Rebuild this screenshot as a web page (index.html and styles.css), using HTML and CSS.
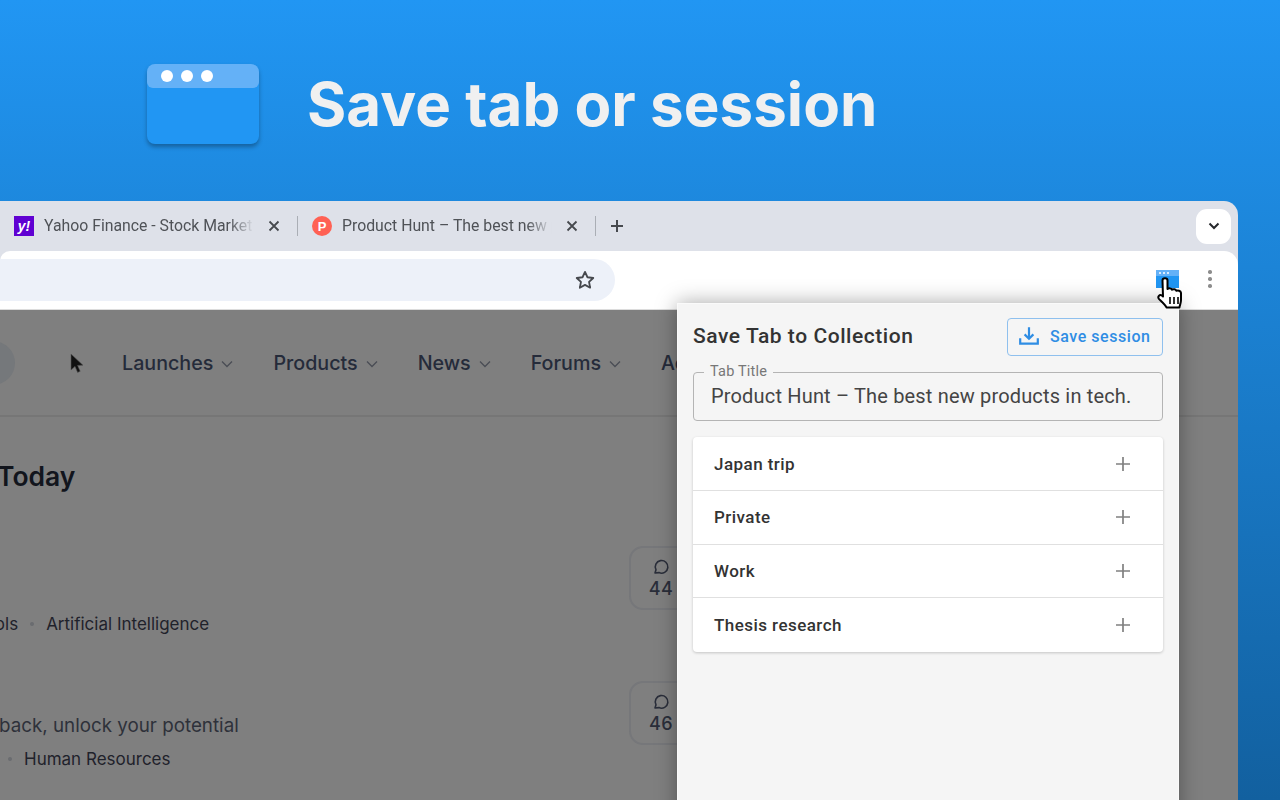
FILE: index.html
```html
<!DOCTYPE html>
<html lang="en">
<head>
  <meta charset="UTF-8" />
  <meta name="viewport" content="width=device-width, initial-scale=1" />
  <title>Save tab or session</title>
  <link rel="stylesheet" href="styles.css">
</head>
<body>

  <header class="hero">
    <div class="app-icon">
      <div class="app-icon-bar"><span></span><span></span><span></span></div>
    </div>
    <h1>Save tab or session</h1>
  </header>

  <div class="browser">

    <!-- Tab strip -->
    <div class="tabstrip">
      <div class="tab">
        <span class="favicon favicon-yahoo">y!</span>
        <span class="tab-title">Yahoo Finance - Stock Market Live</span>
        <svg class="tab-close" viewBox="0 0 12 12"><path d="M1.5 1.5l9 9M10.5 1.5l-9 9"/></svg>
      </div>
      <span class="tab-sep"></span>
      <div class="tab">
        <span class="favicon favicon-ph">P</span>
        <span class="tab-title">Product Hunt – The best new products</span>
        <svg class="tab-close" viewBox="0 0 12 12"><path d="M1.5 1.5l9 9M10.5 1.5l-9 9"/></svg>
      </div>
      <span class="tab-sep"></span>
      <svg class="tab-new" viewBox="0 0 14 14"><path d="M7 1v12M1 7h12"/></svg>
      <div class="tab-search">
        <svg viewBox="0 0 12 8"><path d="M1.5 1.5L6 6l4.5-4.5"/></svg>
      </div>
    </div>

    <!-- Toolbar -->
    <div class="toolbar">
      <div class="omnibox">
        <svg class="star" viewBox="0 0 24 24"><path d="M12 3.2l2.7 5.8 6.3.8-4.6 4.3 1.2 6.3-5.6-3.1-5.6 3.1 1.2-6.3L3 9.8l6.3-.8z"/></svg>
      </div>
      <div class="ext-icon"><div class="ext-icon-bar"><span></span><span></span><span></span></div></div>
      <div class="kebab"><span></span><span></span><span></span></div>
    </div>

    <!-- Dimmed page -->
    <div class="page">
      <nav class="page-nav">
        <span class="search-blob"></span>
        <a>Launches <svg viewBox="0 0 12 8"><path d="M1 1.5l5 5 5-5"/></svg></a>
        <a>Products <svg viewBox="0 0 12 8"><path d="M1 1.5l5 5 5-5"/></svg></a>
        <a>News <svg viewBox="0 0 12 8"><path d="M1 1.5l5 5 5-5"/></svg></a>
        <a>Forums <svg viewBox="0 0 12 8"><path d="M1 1.5l5 5 5-5"/></svg></a>
        <a>Advertise</a>
      </nav>

      <h2 class="page-heading">Today</h2>

      <div class="post">
        <div class="post-info">
          <div class="post-tags post-tags-first">
            <span>Tools</span><i></i><span>Artificial Intelligence</span>
          </div>
        </div>
        <div class="post-comments">
          <svg viewBox="0 0 18 18"><path d="M3 15l1-3.2A6.3 6.3 0 1 1 7 14.6z"/></svg>
          <b>44</b>
        </div>
      </div>

      <div class="post">
        <div class="post-info">
          <p class="post-tagline">back, unlock your potential</p>
          <div class="post-tags post-tags-second">
            <i></i><span>Human Resources</span>
          </div>
        </div>
        <div class="post-comments">
          <svg viewBox="0 0 18 18"><path d="M3 15l1-3.2A6.3 6.3 0 1 1 7 14.6z"/></svg>
          <b>46</b>
        </div>
      </div>
    </div>

    <!-- Extension popup -->
    <div class="popup">
      <div class="popup-head">
        <h3>Save Tab to Collection</h3>
        <button class="save-btn">
          <svg viewBox="0 0 20 20"><path d="M10 2v10M6 8.5l4 4 4-4M2 12v5h16v-5"/></svg>
          Save session
        </button>
      </div>

      <fieldset class="title-field">
        <legend>Tab Title</legend>
        <div class="title-value">Product Hunt – The best new products in tech.</div>
      </fieldset>

      <ul class="collections">
        <li>Japan trip <svg viewBox="0 0 16 16"><path d="M8 1v14M1 8h14"/></svg></li>
        <li>Private <svg viewBox="0 0 16 16"><path d="M8 1v14M1 8h14"/></svg></li>
        <li>Work <svg viewBox="0 0 16 16"><path d="M8 1v14M1 8h14"/></svg></li>
        <li>Thesis research <svg viewBox="0 0 16 16"><path d="M8 1v14M1 8h14"/></svg></li>
      </ul>
    </div>

    <!-- Cursors -->
    <svg class="cursor-arrow" viewBox="0 0 14 22"><path d="M1 1v16l4-3.6 2.6 6 2.6-1.1-2.6-5.9 5.4-.2z"/></svg>
    <svg class="cursor-hand" viewBox="0 0 28 32">
      <path class="hand-fill" d="M5.5 3.5c0-3 5-3 5 0V12c1.3-1 3.8-.9 4.4.7 1.3-.9 4-.7 4.4 1.1 1.4-.7 4.4-.2 4.7 2V23c0 3-1 4.5-1.6 7.5H9.5c-1-2.6-3.4-4.6-7.6-8.6-1.6-2 .6-5 3-3.4l1.1 1z"/>
      <path class="hand-lines" d="M13 20v7M17 20v7M21 20v7"/>
    </svg>
  </div>

</body>
</html>
```

FILE: styles.css
```css
* {
  margin: 0;
  padding: 0;
  box-sizing: border-box;
}

body {
  width: 1280px;
  height: 800px;
  overflow: hidden;
  font-family: 'Inter', sans-serif;
  background: linear-gradient(to bottom, #2196f3, #12609f);
}

/* Hero */
.hero {
  display: flex;
  align-items: center;
  gap: 48px;
  height: 201px;
  padding: 7px 0 0 147px;
}

.hero h1 {
  font-size: 60px;
  font-weight: 700;
  letter-spacing: 0.05px;
  color: #f0f0f0;
}

.app-icon {
  width: 112px;
  height: 80px;
  background: #2196f3;
  border-radius: 8px;
  box-shadow: 0 3px 4px rgba(0, 0, 0, 0.3);
}

.app-icon-bar {
  display: flex;
  align-items: center;
  gap: 8px;
  height: 24px;
  padding-left: 14px;
  background: #64b1f7;
  border-radius: 8px 8px 6px 6px;
}

.app-icon-bar span {
  width: 12px;
  height: 12px;
  border-radius: 50%;
  background: #fff;
}

/* Browser window */
.browser {
  position: relative;
  width: 1238px;
  height: 599px;
  background: #dee1e9;
  border-radius: 0 14px 0 0;
  overflow: hidden;
}

.tabstrip {
  display: flex;
  align-items: center;
  height: 50px;
}

.tab {
  display: flex;
  align-items: center;
  width: 297px;
  padding-left: 14px;
}

.tab-sep {
  width: 1px;
  height: 20px;
  background: #aaaeb5;
}

.favicon {
  display: flex;
  align-items: center;
  justify-content: center;
  width: 20px;
  height: 20px;
  margin-right: 10px;
  color: #fff;
  font-family: 'Liberation Sans', sans-serif;
  font-weight: 700;
}

.favicon-yahoo {
  background: #6001d2;
  font-size: 14px;
  font-style: italic;
}

.favicon-ph {
  background: #ff6154;
  border-radius: 50%;
  font-size: 13px;
}

.tab-title {
  width: 210px;
  padding-bottom: 2px;
  overflow: hidden;
  white-space: nowrap;
  font-family: 'Roboto', sans-serif;
  font-size: 15.8px;
  color: #4f5257;
  -webkit-mask-image: linear-gradient(to right, #000 88%, transparent);
  mask-image: linear-gradient(to right, #000 88%, transparent);
}

.tab-close {
  width: 12px;
  height: 12px;
  margin-left: 14px;
  fill: none;
  stroke: #46494e;
  stroke-width: 1.8;
}

.tab-new {
  width: 14px;
  height: 14px;
  margin-left: 14px;
  fill: none;
  stroke: #46494e;
  stroke-width: 2;
}

.tab-search {
  display: flex;
  align-items: center;
  justify-content: center;
  width: 35px;
  height: 35px;
  margin: 0 7px 0 auto;
  background: #fff;
  border-radius: 11px;
}

.tab-search svg {
  width: 12px;
  height: 8px;
  fill: none;
  stroke: #26282c;
  stroke-width: 2;
}

.toolbar {
  display: flex;
  align-items: center;
  height: 59px;
  background: #fff;
  border-bottom: 1px solid #dcdcdc;
  border-radius: 10px 14px 0 0;
}

.omnibox {
  display: flex;
  align-items: center;
  justify-content: flex-end;
  width: 615px;
  height: 42px;
  margin-top: -1px;
  padding-right: 19px;
  background: #edf1f9;
  border-radius: 0 21px 21px 0;
}

.star {
  width: 22px;
  height: 22px;
  fill: none;
  stroke: #46494e;
  stroke-width: 2;
  stroke-linejoin: round;
}

.ext-icon {
  width: 23px;
  height: 18px;
  margin: -2px 0 0 541px;
  background: #2196f3;
}

.ext-icon-bar {
  display: flex;
  align-items: center;
  gap: 2px;
  height: 6px;
  padding-left: 3px;
  background: #64b1f7;
}

.ext-icon-bar span {
  width: 2px;
  height: 2px;
  border-radius: 50%;
  background: #fff;
}

.kebab {
  display: flex;
  flex-direction: column;
  gap: 3.5px;
  margin: -2px 0 0 29px;
}

.kebab span {
  width: 3.5px;
  height: 3.5px;
  border-radius: 50%;
  background: #8d8d8d;
}

/* Dimmed page behind the popup */
.page {
  height: 490px;
  background: #7f7f7f;
  overflow: hidden;
}

.page-nav {
  display: flex;
  align-items: center;
  height: 107px;
  border-bottom: 2px solid #767676;
  white-space: nowrap;
}

.search-blob {
  width: 44px;
  height: 44px;
  margin: 0 107px 0 -29px;
  border-radius: 50%;
  background: #75787b;
}

.page-nav a {
  display: flex;
  align-items: center;
  gap: 8px;
  margin-right: 40px;
  font-size: 19.7px;
  font-weight: 500;
  color: #252b3a;
}

.page-nav svg {
  width: 12px;
  height: 8px;
  margin-top: 3px;
  fill: none;
  stroke: #4a4d55;
  stroke-width: 1.3;
}

.page-heading {
  margin: 42px 0 53px -3px;
  font-size: 26.5px;
  line-height: 34px;
  font-weight: 600;
  color: #12151d;
}

.post {
  display: flex;
  height: 135px;
}

.post-info {
  display: flex;
  flex-direction: column;
  justify-content: flex-end;
  width: 629px;
  height: 90px;
}

.post-tagline {
  margin-bottom: 7px;
  margin-left: -1px;
  font-size: 18.8px;
  line-height: 28px;
  color: #2e313a;
  white-space: nowrap;
}

.post-tags {
  display: flex;
  align-items: center;
  font-size: 17px;
  line-height: 24px;
  color: #1f222b;
  white-space: nowrap;
}

.post-tags-first {
  margin-left: -25px;
}

.post-tags-second {
  margin-left: 8px;
}

.post-tags i {
  width: 4px;
  height: 4px;
  margin: 0 12px;
  border-radius: 50%;
  background: #6a6c70;
}

.post-tags-second i {
  margin-left: 0;
}

.post-comments {
  display: flex;
  flex-direction: column;
  align-items: center;
  width: 64px;
  height: 64px;
  padding-top: 10px;
  border: 2px solid #76777a;
  border-radius: 14px;
  color: #2a2e3a;
}

.post-comments svg {
  width: 18px;
  height: 18px;
  fill: none;
  stroke: #2a2e3a;
  stroke-width: 1.6;
  stroke-linejoin: round;
}

.post-comments b {
  margin-top: 2px;
  font-size: 18px;
  line-height: 22px;
  font-weight: 500;
  letter-spacing: 0.5px;
}

/* Popup */
.popup {
  position: absolute;
  left: 677px;
  top: 102px;
  width: 502px;
  height: 520px;
  padding: 14px 15px;
  background: #f5f5f5;
  border: 1px solid #fafafa;
  font-family: 'Roboto', sans-serif;
  box-shadow: 0 0 20px rgba(0, 0, 0, 0.35);
}

.popup-head {
  display: flex;
  align-items: center;
  justify-content: space-between;
}

.popup-head h3 {
  margin-top: -2px;
  font-size: 21px;
  font-weight: 500;
  letter-spacing: 0.55px;
  color: #333;
}

.save-btn {
  display: flex;
  align-items: center;
  gap: 10px;
  width: 156px;
  height: 38px;
  padding: 0 0 2px 10px;
  background: transparent;
  border: 1px solid #8fc0ee;
  border-radius: 4px;
  font-family: inherit;
  font-size: 16px;
  font-weight: 500;
  letter-spacing: 0.55px;
  color: #2f8de4;
}

.save-btn svg {
  width: 22px;
  height: 22px;
  fill: none;
  stroke: #2f8de4;
  stroke-width: 2;
}

.title-field {
  height: 57px;
  margin-top: 8px;
  padding: 2px 17px 0;
  border: 1px solid #b4b4b4;
  border-radius: 4px;
}

.title-field legend {
  margin-left: -7px;
  padding: 0 6px;
  font-size: 14.5px;
  line-height: 16px;
  letter-spacing: 0.2px;
  color: #777;
}

.title-value {
  font-size: 20px;
  line-height: 28px;
  letter-spacing: 0.17px;
  color: #444;
  white-space: nowrap;
}

.collections {
  margin-top: 16px;
  list-style: none;
  background: #fff;
  border-radius: 4px;
  box-shadow: 0 1px 3px rgba(0, 0, 0, 0.2);
}

.collections li {
  display: flex;
  align-items: center;
  justify-content: space-between;
  height: 53.75px;
  padding: 0.5px 32px 0 21px;
  border-bottom: 1px solid #e0e0e0;
  font-size: 17px;
  font-weight: 500;
  letter-spacing: 0.45px;
  color: #333;
}

.collections li:last-child {
  border-bottom: none;
}

.collections svg {
  width: 16px;
  height: 16px;
  fill: none;
  stroke: #808080;
  stroke-width: 1.7;
}

/* Cursors */
.cursor-arrow {
  position: absolute;
  left: 70px;
  top: 152px;
  width: 14px;
  height: 22px;
  fill: #111;
  stroke: #555;
  stroke-width: 0.6;
}

.cursor-hand {
  position: absolute;
  left: 1157px;
  top: 76px;
  width: 28px;
  height: 32px;
}

.hand-fill {
  fill: #fff;
  stroke: #000;
  stroke-width: 2;
  stroke-linejoin: round;
}

.hand-lines {
  fill: none;
  stroke: #000;
  stroke-width: 1.6;
}
```
